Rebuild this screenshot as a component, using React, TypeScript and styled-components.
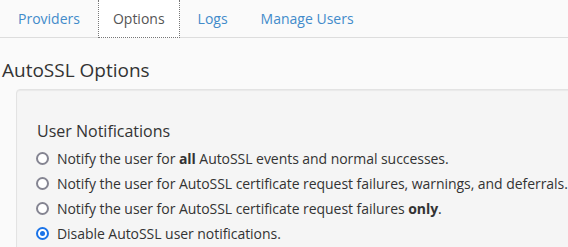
import React from "react";
import styled, { createGlobalStyle } from "styled-components";

const GlobalStyle = createGlobalStyle`
  html, body {
    margin: 0;
    padding: 0;
    background: #fafafa;
    font-family: "Open Sans", "Liberation Sans", sans-serif;
    color: #333;
    overflow: hidden;
  }
`;

const Page = styled.div`
  width: 568px;
  height: 247px;
  overflow: hidden;
`;

const TabList = styled.ul`
  display: flex;
  list-style: none;
  margin: 0;
  padding: 0 0 0 3px;
  border-bottom: 1px solid #ddd;
`;

const Tab = styled.li<{ $active?: boolean }>`
  margin-right: 3px;
  margin-bottom: -1px;
  padding: 9px 14px 8px;
  font-size: 14px;
  line-height: 20px;
  color: ${(p) => (p.$active ? "#555" : "#428bca")};
  background: ${(p) => (p.$active ? "#fff" : "transparent")};
  border: 1px dotted ${(p) => (p.$active ? "#777" : "transparent")};
  border-top: none;
  cursor: pointer;
`;

const Heading = styled.h2`
  margin: 18px 0 0 2px;
  font-size: 19px;
  font-weight: 400;
  line-height: 28px;
  color: #333;
`;

const Well = styled.div`
  margin: 5px -20px 0 16px;
  padding: 19px;
  background: #f5f5f5;
  border: 1px solid #e3e3e3;
  border-radius: 4px;
  box-shadow: inset 0 1px 1px rgba(0, 0, 0, 0.05);
`;

const Legend = styled.h3`
  margin: 11px 0 4px 1px;
  font-size: 16px;
  font-weight: 400;
  line-height: 22px;
  color: #333;
`;

const Option = styled.label`
  display: flex;
  align-items: center;
  gap: 8px;
  height: 25px;
  font-size: 14px;
  letter-spacing: -0.05px;
  white-space: nowrap;
  color: #333;
`;

const Radio = styled.span<{ $checked?: boolean }>`
  box-sizing: border-box;
  flex: none;
  width: 13px;
  height: 13px;
  border-radius: 50%;
  border: 2px solid ${(p) => (p.$checked ? "#1a73e8" : "#858592")};
  background: #fff;
  display: flex;
  align-items: center;
  justify-content: center;

  &::after {
    content: "";
    width: 5px;
    height: 5px;
    border-radius: 50%;
    background: ${(p) => (p.$checked ? "#1a73e8" : "transparent")};
  }
`;

const tabs = ["Providers", "Options", "Logs", "Manage Users"];

const options: React.ReactNode[] = [
  <>Notify the user for <b>all</b> AutoSSL events and normal successes.</>,
  <>Notify the user for AutoSSL certificate request failures, warnings, and deferrals.</>,
  <>Notify the user for AutoSSL certificate request failures <b>only</b>.</>,
  <>Disable AutoSSL user notifications.</>,
];

export default function App() {
  return (
    <Page>
      <GlobalStyle />
      <TabList>
        {tabs.map((t) => (
          <Tab key={t} $active={t === "Options"}>
            {t}
          </Tab>
        ))}
      </TabList>
      <Heading>AutoSSL Options</Heading>
      <Well>
        <Legend>User Notifications</Legend>
        {options.map((o, i) => (
          <Option key={i}>
            <Radio $checked={i === 3} />
            <span>{o}</span>
          </Option>
        ))}
      </Well>
    </Page>
  );
}
